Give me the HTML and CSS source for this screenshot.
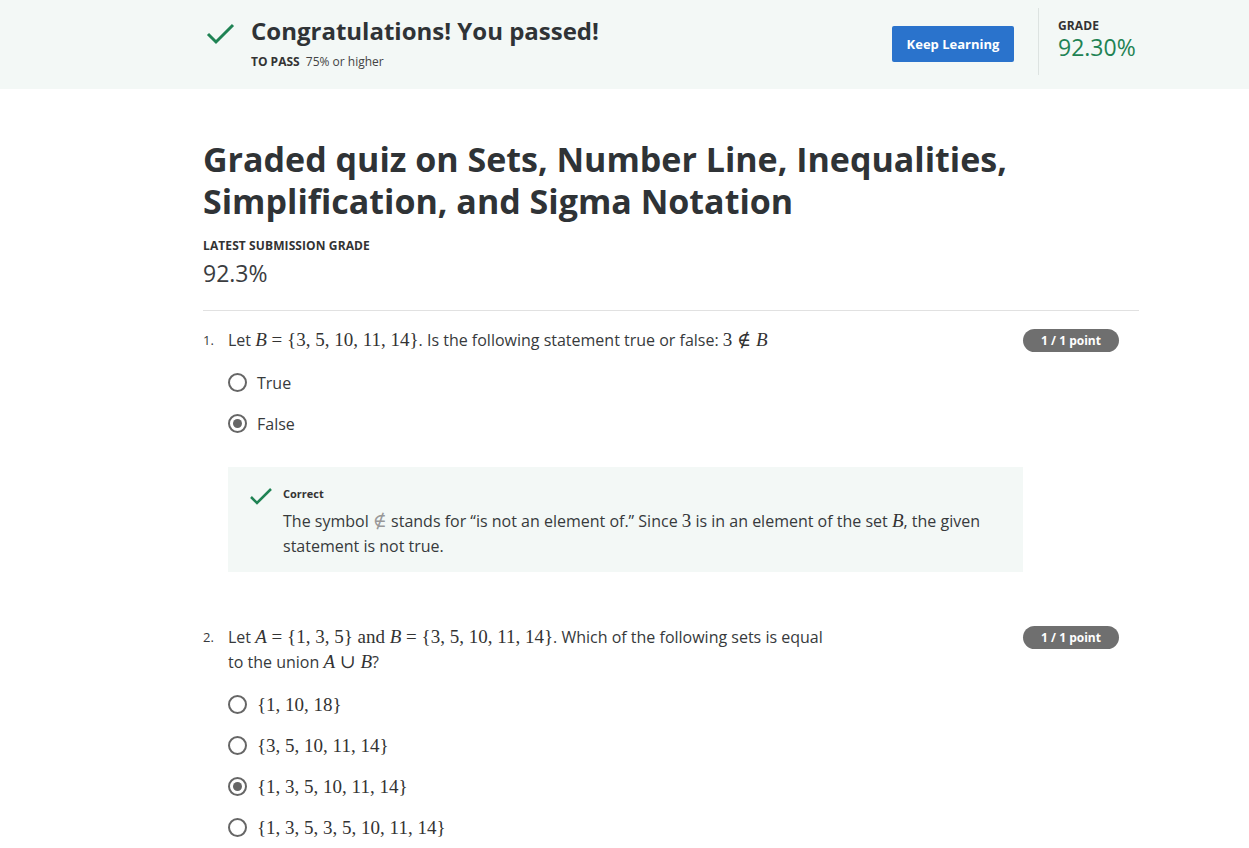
FILE: index.html
```html
<!DOCTYPE html>
<html lang="en">
<head>
<meta charset="utf-8">
<title>Graded quiz</title>
<link rel="stylesheet" href="styles.css">
</head>
<body>
<header class="banner">
  <div class="wrap banner-inner">
    <svg class="pass-check" width="30" height="24" viewBox="0 0 30 24"><path d="M2 12 L10 20 L27 3" fill="none" stroke="#1f8354" stroke-width="3"/></svg>
    <div class="pass-text">
      <h2 class="pass-title">Congratulations! You passed!</h2>
      <div class="pass-sub"><b>TO PASS</b> 75% or higher</div>
    </div>
    <button class="keep">Keep Learning</button>
    <div class="grade-box">
      <div class="label">GRADE</div>
      <div class="grade-val">92.30%</div>
    </div>
  </div>
</header>

<main class="wrap main">
  <h1 class="quiz-title">Graded quiz on Sets, Number Line, Inequalities, Simplification, and Sigma Notation</h1>
  <div class="label latest">LATEST SUBMISSION GRADE</div>
  <div class="latest-val">92.3%</div>
  <hr class="rule">

  <section class="q">
    <div class="q-head">
      <span class="q-num">1.</span>
      <div class="q-text">Let <span class="m"><i>B</i> = {3, 5, 10, 11, 14}</span>. Is the following statement true or false: <span class="m">3 ∉ <i>B</i></span></div>
      <span class="badge">1 / 1 point</span>
    </div>
    <div class="opts">
      <div class="opt"><span class="radio"></span><span>True</span></div>
      <div class="opt"><span class="radio on"></span><span>False</span></div>
    </div>
    <div class="feedback">
      <svg class="fb-check" width="24" height="20" viewBox="0 0 24 20"><path d="M2 10 L8 16 L22 2" fill="none" stroke="#1f8354" stroke-width="2.5"/></svg>
      <div class="fb-body">
        <div class="fb-title">Correct</div>
        <div class="fb-text">The symbol <span class="m light">∉</span> stands for “is not an element of.” Since <span class="m">3</span> is in an element of the set <span class="m"><i>B</i></span>, the given statement is not true.</div>
      </div>
    </div>
  </section>

  <section class="q q2">
    <div class="q-head">
      <span class="q-num">2.</span>
      <div class="q-text narrow">Let <span class="m"><i>A</i> = {1, 3, 5} and <i>B</i> = {3, 5, 10, 11, 14}</span>. Which of the following sets is equal to the union <span class="m"><i>A</i> ∪ <i>B</i></span>?</div>
      <span class="badge">1 / 1 point</span>
    </div>
    <div class="opts">
      <div class="opt"><span class="radio"></span><span class="m">{1, 10, 18}</span></div>
      <div class="opt"><span class="radio"></span><span class="m">{3, 5, 10, 11, 14}</span></div>
      <div class="opt"><span class="radio on"></span><span class="m">{1, 3, 5, 10, 11, 14}</span></div>
      <div class="opt"><span class="radio"></span><span class="m">{1, 3, 5, 3, 5, 10, 11, 14}</span></div>
    </div>
  </section>
</main>
</body>
</html>
```

FILE: styles.css
```css
* { box-sizing: border-box; }
html, body { margin: 0; padding: 0; }
body {
  font-family: "Open Sans", "Liberation Sans", sans-serif;
  color: #373a3c;
  background: #fff;
}
.wrap {
  width: 936px;
  margin-left: 203px;
}
.banner {
  background: #f3f8f6;
  height: 89px;
}
.banner-inner {
  display: flex;
  align-items: flex-start;
  height: 89px;
}
.pass-check {
  margin-top: 22px;
  margin-left: 3px;
  flex: none;
}
.pass-text {
  margin-left: 15px;
  flex: 1;
}
.pass-title {
  margin: 14px 0 0;
  font-size: 24px;
  font-weight: 700;
  line-height: 34px;
  color: #2f3336;
}
.pass-sub {
  font-size: 12px;
  margin-top: 5px;
  color: #444;
}
.pass-sub b { color: #333; margin-right: 3px; }
.keep {
  margin-top: 26px;
  width: 122px;
  height: 36px;
  background: #2a73cc;
  color: #fff;
  border: none;
  border-radius: 2px;
  font-family: inherit;
  font-weight: 700;
  font-size: 13px;
  padding: 0;
}
.grade-box {
  margin-left: 24px;
  margin-top: 8px;
  height: 67px;
  border-left: 1px solid #dde3e1;
  padding-left: 19px;
  width: 101px;
  padding-top: 9px;
}
.label {
  font-size: 12px;
  font-weight: 700;
  color: #333;
  letter-spacing: 0.1px;
}
.grade-val {
  font-size: 23px;
  color: #1f8354;
  line-height: 26px;
}
.main { padding-top: 49px; }
.quiz-title {
  margin: 0;
  font-size: 34px;
  line-height: 42px;
  font-weight: 700;
  color: #2f3336;
  width: 820px;
}
.latest { margin-top: 15px; }
.latest-val {
  font-size: 23px;
  line-height: 30px;
  margin-top: 4px;
  color: #3b3d3f;
}
.rule {
  border: none;
  border-top: 1px solid #e1e1e1;
  margin: 22px 0 0;
}
.q { padding-top: 17px; }
.q2 { padding-top: 53px; }
.q-head {
  display: flex;
  align-items: flex-start;
}
.q-num {
  width: 25px;
  font-size: 13px;
  line-height: 25px;
  flex: none;
}
.q-text {
  font-size: 16px;
  line-height: 25px;
  flex: 1;
}
.q-text.narrow { flex: none; width: 600px; margin-right: auto; }
.badge {
  background: #6f6f6f;
  color: #fff;
  font-size: 12px;
  font-weight: 700;
  border-radius: 12px;
  height: 23px;
  line-height: 23px;
  width: 96px;
  text-align: center;
  margin-right: 20px;
  margin-top: 1px;
  flex: none;
}
.m {
  font-family: "Liberation Serif", "DejaVu Serif", serif;
  font-size: 19px;
  line-height: 1;
  color: #333;
}
.m i { font-style: italic; }
.m.light { color: #999; }
.opts {
  padding-left: 25px;
  padding-top: 17px;
  display: flex;
  flex-direction: column;
  gap: 16px;
}
.opt {
  display: flex;
  align-items: center;
  gap: 10px;
  height: 25px;
  font-size: 16px;
}
.radio {
  width: 19px;
  height: 19px;
  border: 2px solid #666;
  border-radius: 50%;
  flex: none;
  position: relative;
}
.radio.on::after {
  content: "";
  position: absolute;
  left: 3px; top: 3px;
  width: 9px; height: 9px;
  border-radius: 50%;
  background: #666;
}
.feedback {
  margin-left: 25px;
  margin-top: 31px;
  width: 795px;
  background: #f3f8f6;
  display: flex;
  padding: 18px 20px 13px 21px;
  gap: 10px;
}
.fb-check { flex: none; margin-top: 2px; }
.fb-title {
  font-size: 11px;
  font-weight: 700;
  color: #333;
  line-height: 18px;
}
.fb-text {
  font-size: 16px;
  line-height: 25px;
  margin-top: 6px;
}
```
